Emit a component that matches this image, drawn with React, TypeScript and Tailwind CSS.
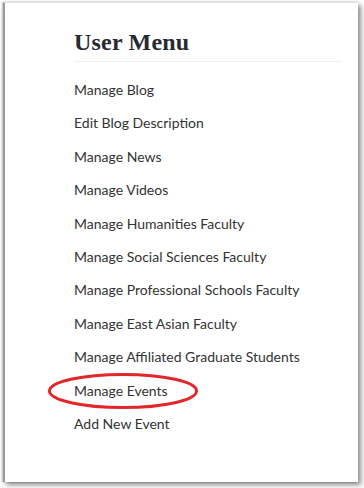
import React from "react";

const items = [
  "Manage Blog",
  "Edit Blog Description",
  "Manage News",
  "Manage Videos",
  "Manage Humanities Faculty",
  "Manage Social Sciences Faculty",
  "Manage Professional Schools Faculty",
  "Manage East Asian Faculty",
  "Manage Affiliated Graduate Students",
  "Manage Events",
  "Add New Event",
];

export default function App() {
  return (
    <div className="w-[364px] h-[488px] bg-white pl-[3px] pr-[6px] pt-[2px] pb-[6px]">
      <div className="relative h-full bg-white border-t border-[#e2e2e2] border-l-2 border-l-[#9a9a9a] shadow-[-1px_0_2px_rgba(0,0,0,0.25),3px_3px_5px_rgba(0,0,0,0.45)] pl-[69px] pr-[16px] pt-[23px]">
        <h2
          className="text-[24px] font-bold text-[#262a33] leading-[32px] tracking-[0.2px]"
          style={{ fontFamily: '"Liberation Serif", "DejaVu Serif", serif' }}
        >
          User Menu
        </h2>
        <div className="mt-[3px] h-px bg-[#eeeeee]" />
        <ul
          className="mt-[18px] flex flex-col gap-[13.4px] text-[14px] leading-[20px] text-[#333333]"
          style={{ fontFamily: 'Lato, "Liberation Sans", sans-serif' }}
        >
          {items.map((t) => (
            <li key={t} className="relative">
              {t}
              {t === "Manage Events" && (
                <svg
                  className="absolute left-[-28px] top-[-9px]"
                  width="156"
                  height="40"
                  viewBox="0 0 156 40"
                >
                  <ellipse
                    cx="77"
                    cy="19"
                    rx="73.5"
                    ry="16.5"
                    fill="none"
                    stroke="#e3262a"
                    strokeWidth="3"
                  />
                </svg>
              )}
            </li>
          ))}
        </ul>
      </div>
    </div>
  );
}
